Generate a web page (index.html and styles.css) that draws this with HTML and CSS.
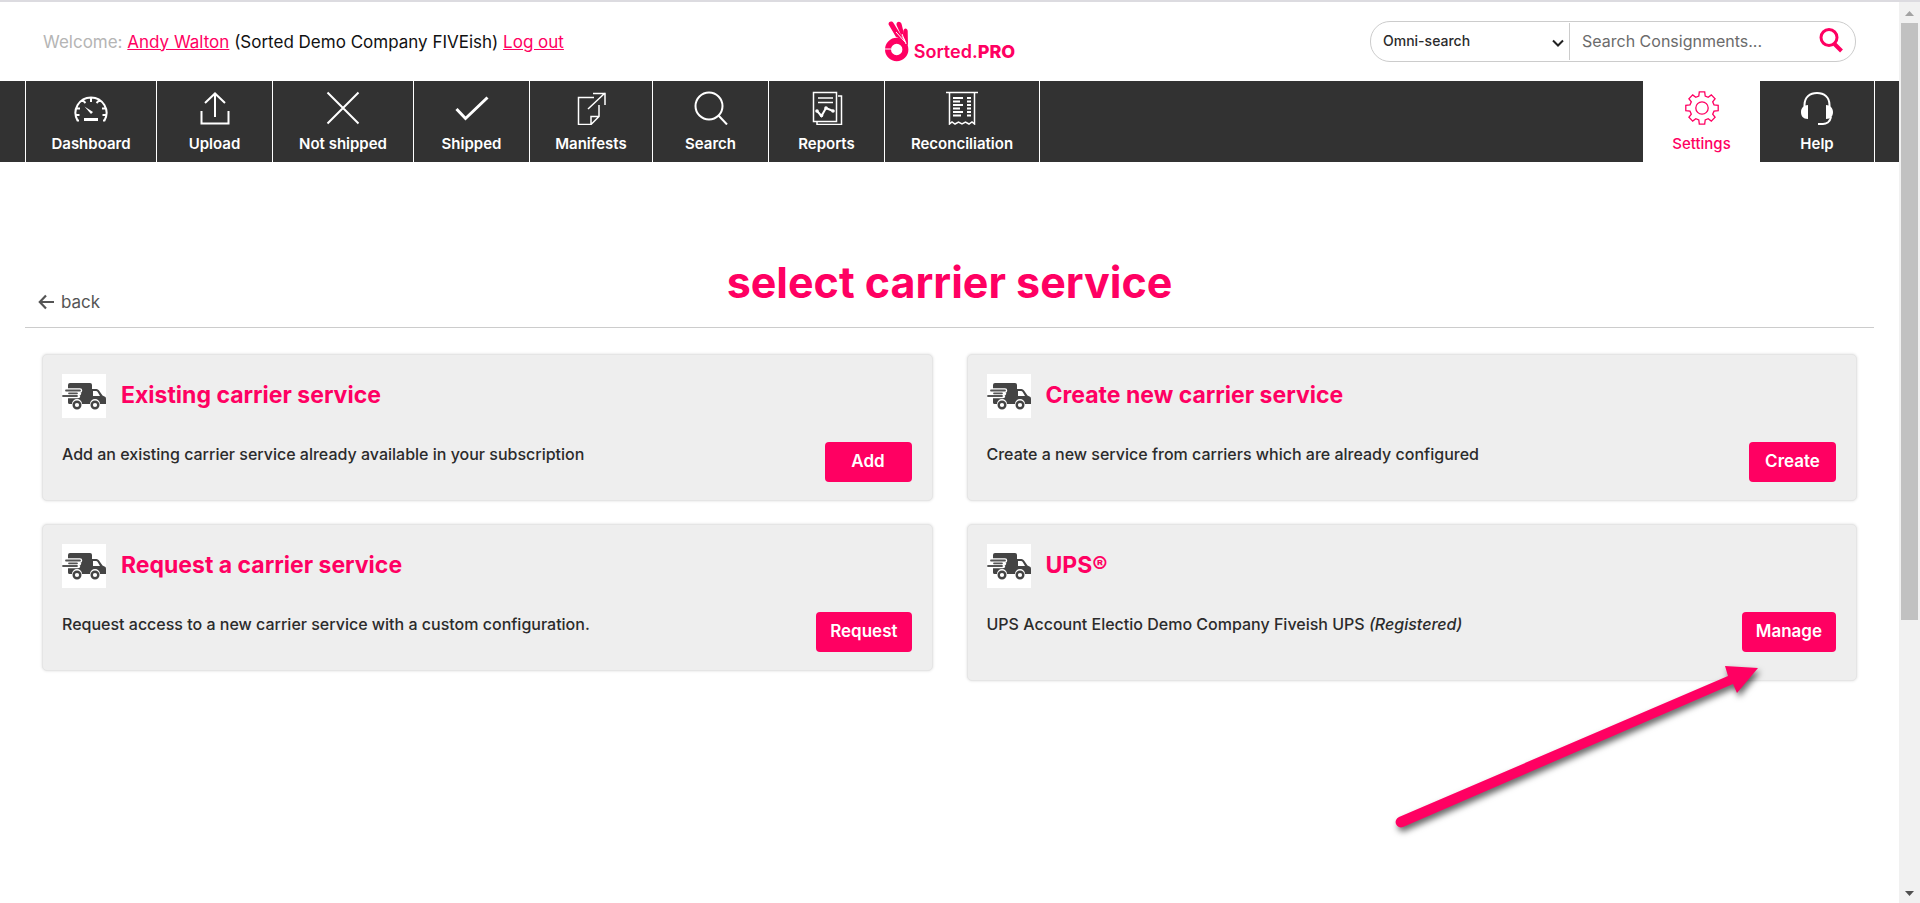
FILE: index.html
```html
<!DOCTYPE html>
<html lang="en">
<head>
<meta charset="utf-8">
<title>Sorted.PRO - Select carrier service</title>
<link rel="stylesheet" href="styles.css">
</head>
<body>
<svg class="defs" width="0" height="0" aria-hidden="true">
  <symbol id="truck" viewBox="0 0 44 44">
    <path fill="#444" d="M6 11q0-2 2-2h20q2 0 2 2v4h4.500q1.500 0 2.500 1.500l3.500 5 3 1.500q.500 1 .500 2v5h-6a5 5 0 0 0-10 0h-8a5 5 0 0 0-10 0H7.500Q6 30 6 28.500z"/>
    <path fill="#fff" d="M31 17h3q1 0 1.700 1l2.300 4h-7z"/>
    <g stroke-linecap="round" fill="none">
      <path stroke="#fff" stroke-width="4.500" d="M4 16.500h14M2 22h14M8 19.300h9"/>
      <path stroke="#555" stroke-width="1.800" d="M4 16.500h14M1 22h14M7 19.300h8"/>
    </g>
    <g fill="#fff" stroke="#444" stroke-width="2.400"><circle cx="15" cy="31" r="3.300"/><circle cx="33" cy="31" r="3.300"/></g>
  </symbol>
</svg>
<div class="shell">
  <div class="page">
    <header class="top">
      <p class="welcome"><span class="muted">Welcome:</span> <a href="#account">Andy Walton</a> (Sorted Demo Company FIVEish) <a href="#logout">Log out</a></p>
      <a class="brand" href="#home">
        <svg class="brand-mark" viewBox="0 0 30 42" aria-hidden="true">
          <circle cx="12.700" cy="29.500" r="8.700" fill="none" stroke="#ff0062" stroke-width="6"/>
          <path fill="#ff0062" d="M4.600 4.500C4 1.500 8 .500 9.500 3L20 20l-8-3zM12.500 5c-.500-4 4.500-4.500 5.200-.500L21.500 20 17 15zM19.500 11c0-3.500 4-3.500 4.200 0l.300 15-3-6z"/>
          <path stroke="#fff" stroke-width="1" fill="none" d="M0 29h7M12 12l9 10M18 14l4 10"/>
        </svg>
        <span>Sorted.<b>PRO</b></span>
      </a>
      <form class="search">
        <div class="search-type">
          <select aria-label="Search type"><option>Omni-search</option></select>
          <svg viewBox="0 0 12 8" aria-hidden="true"><path d="M1 1.500l5 5 5-5" fill="none" stroke="#222" stroke-width="2"/></svg>
        </div>
        <input type="text" placeholder="Search Consignments..." aria-label="Search consignments">
        <button type="button" aria-label="Search"><svg viewBox="0 0 24 26"><g fill="none" stroke="#ff0062"><circle cx="10" cy="10.500" r="8" stroke-width="3"/><path d="M15.500 17l7 7" stroke-width="4"/></g></svg></button>
      </form>
    </header>

    <nav class="nav">
      <a class="w-131" href="#dashboard"><svg viewBox="0 0 34 34"><path d="M5 29.500H3.500A15.500 15.500 0 1 1 30.500 29.500H29M17 6v5M8.500 9l3 3M25.500 9l-3 3M2 17.500h4M28 17.500h4M2.500 24h3M28.500 24h3"/><path d="M10.500 15.500l8.500 5.500-2 2z" fill="#fff" stroke="none"/><path d="M10 28.500h14" stroke-width="3"/></svg>Dashboard</a>
      <a class="w-116" href="#upload"><svg viewBox="0 0 34 34"><path d="M3.500 20v12.500h27V20M17 3v23M7 12l10-9.500L27 12"/></svg>Upload</a>
      <a class="w-141" href="#not-shipped"><svg viewBox="0 0 34 34"><path d="M1.500 1.500l31 31M32.500 1.500l-31 31"/></svg>Not shipped</a>
      <a class="w-116" href="#shipped"><svg viewBox="0 0 34 34"><path d="M1.500 18l9 9.500 22-21" stroke-width="3"/></svg>Shipped</a>
      <a class="w-123" href="#manifests"><svg viewBox="0 0 34 34" class="thin"><path d="M20 6.500H4.500v27H17l8-8V14M17 33.500v-8h8M14 18L31 2M19 2.500h12V14"/></svg>Manifests</a>
      <a class="w-116" href="#search"><svg viewBox="0 0 34 34"><circle cx="15" cy="15" r="13.500"/><path d="M24.500 24.500l8.500 9"/></svg>Search</a>
      <a class="w-116" href="#reports"><svg viewBox="0 0 34 34" class="thin"><path d="M3.500 1.500h23v29h-23zM28 5h3.500v28.500H7V31M8 7h15M8 11.500h15"/><path d="M7 20l4.500 5L16 17l7 3" stroke-width="2"/><g fill="#fff" stroke="none"><circle cx="7" cy="20" r="1.800"/><circle cx="11.500" cy="24.500" r="1.800"/><circle cx="16" cy="17" r="1.800"/><circle cx="23" cy="20" r="1.800"/></g></svg>Reports</a>
      <a class="w-155" href="#reconciliation"><svg viewBox="0 0 34 34" class="thin"><path d="M1 1.500h32M4.500 2v31l2.500-2 3 2 3.500-2 3.500 2 3.500-2 3.500 2 3-2 2.500 2V2"/><path d="M8 7h10M8 10.500h7M8 14h10M8 17.500h7M8 21h10M8 24.500h8M22 7h4M22 10.500h4M22 14h4M22 17.500h4M22 21h4M22 24.500h4" stroke-width="2"/></svg>Reconciliation</a>
      <span class="nav-gap"></span>
      <a class="w-116 active" href="#settings"><svg viewBox="-17 -17 34 34"><path d="M-3.200-12L-2.700-16.200H2.700L3.200-12 6.200-10.700 9.300-13.100 13.100-9.300 10.700-6.200 12-3.200 16.200-2.700V2.700L12 3.200 10.700 6.200 13.100 9.300 9.300 13.100 6.200 10.700 3.200 12 2.700 16.200H-2.700L-3.200 12-6.200 10.700-9.300 13.100-13.100 9.300-10.700 6.200-12 3.200-16.200 2.700V-2.700L-12-3.200-10.700-6.200-13.100-9.300-9.300-13.100-6.200-10.700z"/><circle r="6.200"/></svg>Settings</a>
      <a class="w-116 help" href="#help"><svg viewBox="0 0 34 34"><path d="M4.500 17v-3C4.500 6 10 2 17 2s12.500 4 12.500 12v3M31 26c-1 5-5 7-8 7h-5" /><path d="M8 14v14C3 28 1 25 1 21s3-7 7-7zM26 14v14c5 0 7-3 7-7s-3-7-7-7z" fill="#fff" stroke="none"/></svg>Help</a>
    </nav>

    <main class="main">
      <div class="title-row">
        <a class="back" href="#back"><svg viewBox="0 0 16 16" aria-hidden="true"><path d="M16 8H2M8 1.500L1.800 8 8 14.500" fill="none" stroke="#555" stroke-width="2.200"/></svg>back</a>
        <h1>select carrier service</h1>
      </div>
      <div class="cards">
        <section class="card">
          <div class="card-head"><svg class="truck"><use href="#truck"/></svg><h2>Existing carrier service</h2></div>
          <div class="card-body"><p>Add an existing carrier service already available in your subscription</p><button type="button">Add</button></div>
        </section>
        <section class="card">
          <div class="card-head"><svg class="truck"><use href="#truck"/></svg><h2>Create new carrier service</h2></div>
          <div class="card-body"><p>Create a new service from carriers which are already configured</p><button type="button">Create</button></div>
        </section>
        <section class="card">
          <div class="card-head"><svg class="truck"><use href="#truck"/></svg><h2>Request a carrier service</h2></div>
          <div class="card-body"><p>Request access to a new carrier service with a custom configuration.</p><button type="button">Request</button></div>
        </section>
        <section class="card registered">
          <div class="card-head"><svg class="truck"><use href="#truck"/></svg><h2>UPS®</h2></div>
          <div class="card-body"><p>UPS Account Electio Demo Company Fiveish UPS <em>(Registered)</em></p><button type="button">Manage</button></div>
          <svg class="pointer" viewBox="0 0 380 190" aria-hidden="true"><path fill="#ff0062" d="M9 162L338 21l-3-10 33 2-21 25-4-9L13 172A5 5 0 0 1 9 162z"/></svg>
        </section>
      </div>
    </main>
  </div>
  <div class="scrollbar" aria-hidden="true">
    <svg viewBox="0 0 21 21"><path d="M6 14l4.500-5 4.500 5z" fill="#a3a3a3"/></svg>
    <div class="track"><div class="thumb"></div></div>
    <svg viewBox="0 0 21 21"><path d="M6 9l4.500 5L15 9z" fill="#505050"/></svg>
  </div>
</div>
</body>
</html>
```
FILE: styles.css
```css
* { box-sizing: border-box; }
body {
  margin: 0;
  font-family: Inter, "Liberation Sans", sans-serif;
  font-size: 16px;
  color: #2b2b2b;
  background: #fff;
}
p, h1, h2 { margin: 0; }
a { color: #ff0062; }
button, input, select { font: inherit; }
.defs { position: absolute; }

.shell {
  display: flex;
  height: 100vh;
  border-top: 2px solid #dcdbe0;
}
.page { flex: 1; min-width: 0; }

.top {
  display: grid;
  grid-template-columns: 1fr auto 1fr;
  align-items: center;
  height: 79px;
  padding: 0 43px;
}
.welcome { color: #111; font-size: 17px; white-space: nowrap; }
.muted { color: #b5b5b5; }
.brand {
  display: flex;
  align-items: flex-end;
  color: #ff0062;
  font-size: 18px;
  font-weight: 600;
  line-height: 24px;
  text-decoration: none;
}
.brand b { font-weight: 800; }
.brand-mark { width: 30px; height: 42px; margin-bottom: 2px; }
.search {
  display: flex;
  justify-self: end;
  align-items: center;
  width: 486px;
  height: 41px;
  border: 1px solid #ccc;
  border-radius: 20px;
}
.search-type {
  position: relative;
  width: 199px;
  height: 37px;
  border-right: 1px solid #ccc;
}
.search select {
  width: 100%;
  height: 34px;
  padding: 0 30px 0 12px;
  border: 0;
  background: none;
  color: #2b2b2b;
  font-size: 14px;
  font-weight: 500;
  appearance: none;
}
.search-type svg {
  position: absolute;
  right: 5px;
  top: 16px;
  width: 12px;
  height: 8px;
  pointer-events: none;
}
.search input {
  flex: 1;
  min-width: 0;
  height: 36px;
  padding: 0 12px 2px;
  border: 0;
  background: none;
}
.search input::placeholder { color: #6b6b6b; opacity: 1; }
.search button {
  width: 48px;
  height: 37px;
  padding: 0;
  border: 0;
  background: none;
}
.search button svg { width: 24px; height: 26px; }

.nav {
  display: flex;
  height: 81px;
  padding: 0 24px 0 25px;
  background: #323232;
}
.nav a {
  display: flex;
  flex-direction: column;
  align-items: center;
  gap: 9px;
  padding-top: 10px;
  border-left: 1px solid #fff;
  color: #fff;
  font-size: 15px;
  font-weight: 600;
  line-height: 20px;
  text-decoration: none;
}
.nav svg {
  width: 34px;
  height: 34px;
  fill: none;
  stroke: #fff;
  stroke-width: 2;
}
.nav .thin { stroke-width: 1.5; }
.w-116 { width: 116px; }
.w-123 { width: 123px; }
.w-131 { width: 131px; }
.w-141 { width: 141px; }
.w-155 { width: 155px; }
.nav-gap { flex: 1; border-left: 1px solid #fff; }
.nav .active { background: #fff; color: #ff0062; font-weight: 500; }
.nav .active svg { stroke: #ff0062; stroke-width: 1.3; }
.nav .help { border-right: 1px solid #fff; }

.main { padding: 80px 25px 0; }
.title-row {
  display: grid;
  grid-template-columns: 1fr auto 1fr;
  height: 86px;
  padding: 0 13px;
  border-bottom: 1px solid #ccc;
}
.title-row h1 {
  color: #ff0062;
  font-size: 43px;
  font-weight: 700;
  line-height: 80px;
}
.back {
  display: flex;
  align-self: end;
  align-items: center;
  gap: 7px;
  padding-bottom: 14px;
  color: #555;
  font-size: 17px;
  line-height: 22px;
  text-decoration: none;
}
.back svg { width: 16px; height: 16px; }

.cards {
  display: grid;
  grid-template-columns: 1fr 1fr;
  align-items: start;
  gap: 23px 34px;
  padding: 26px 17px 0;
}
.card {
  position: relative;
  min-height: 147px;
  padding: 19px 20px 17px 19px;
  border: 1px solid #e5e5e5;
  border-radius: 5px;
  background: #eee;
  box-shadow: 0 0 3px #ddd;
}
.registered { padding-bottom: 28px; }
.card-head { display: flex; align-items: flex-start; gap: 15px; }
.card-head h2 {
  color: #ff0062;
  font-size: 23px;
  font-weight: 700;
  line-height: 42px;
}
.truck { width: 44px; height: 44px; background: #fff; }
.card-body {
  display: flex;
  justify-content: space-between;
  margin-top: 24px;
}
.card-body p { font-weight: 500; line-height: 24px; }
.card-body button {
  min-width: 87px;
  height: 40px;
  padding: 0 14px 2px;
  border: 0;
  border-radius: 4px;
  background: #ff0062;
  color: #fff;
  font-size: 17px;
  font-weight: 600;
}
.pointer {
  position: absolute;
  right: 86px;
  top: 130px;
  width: 380px;
  height: 190px;
  overflow: visible;
  pointer-events: none;
  filter: drop-shadow(2px 4px 3px rgba(0, 0, 0, 0.6));
}

.scrollbar {
  display: flex;
  flex-direction: column;
  width: 21px;
  background: #f1f1f1;
}
.scrollbar svg { width: 21px; height: 21px; }
.track { flex: 1; padding: 0 2px; }
.thumb { height: 69.5%; background: #c1c1c1; }
```
